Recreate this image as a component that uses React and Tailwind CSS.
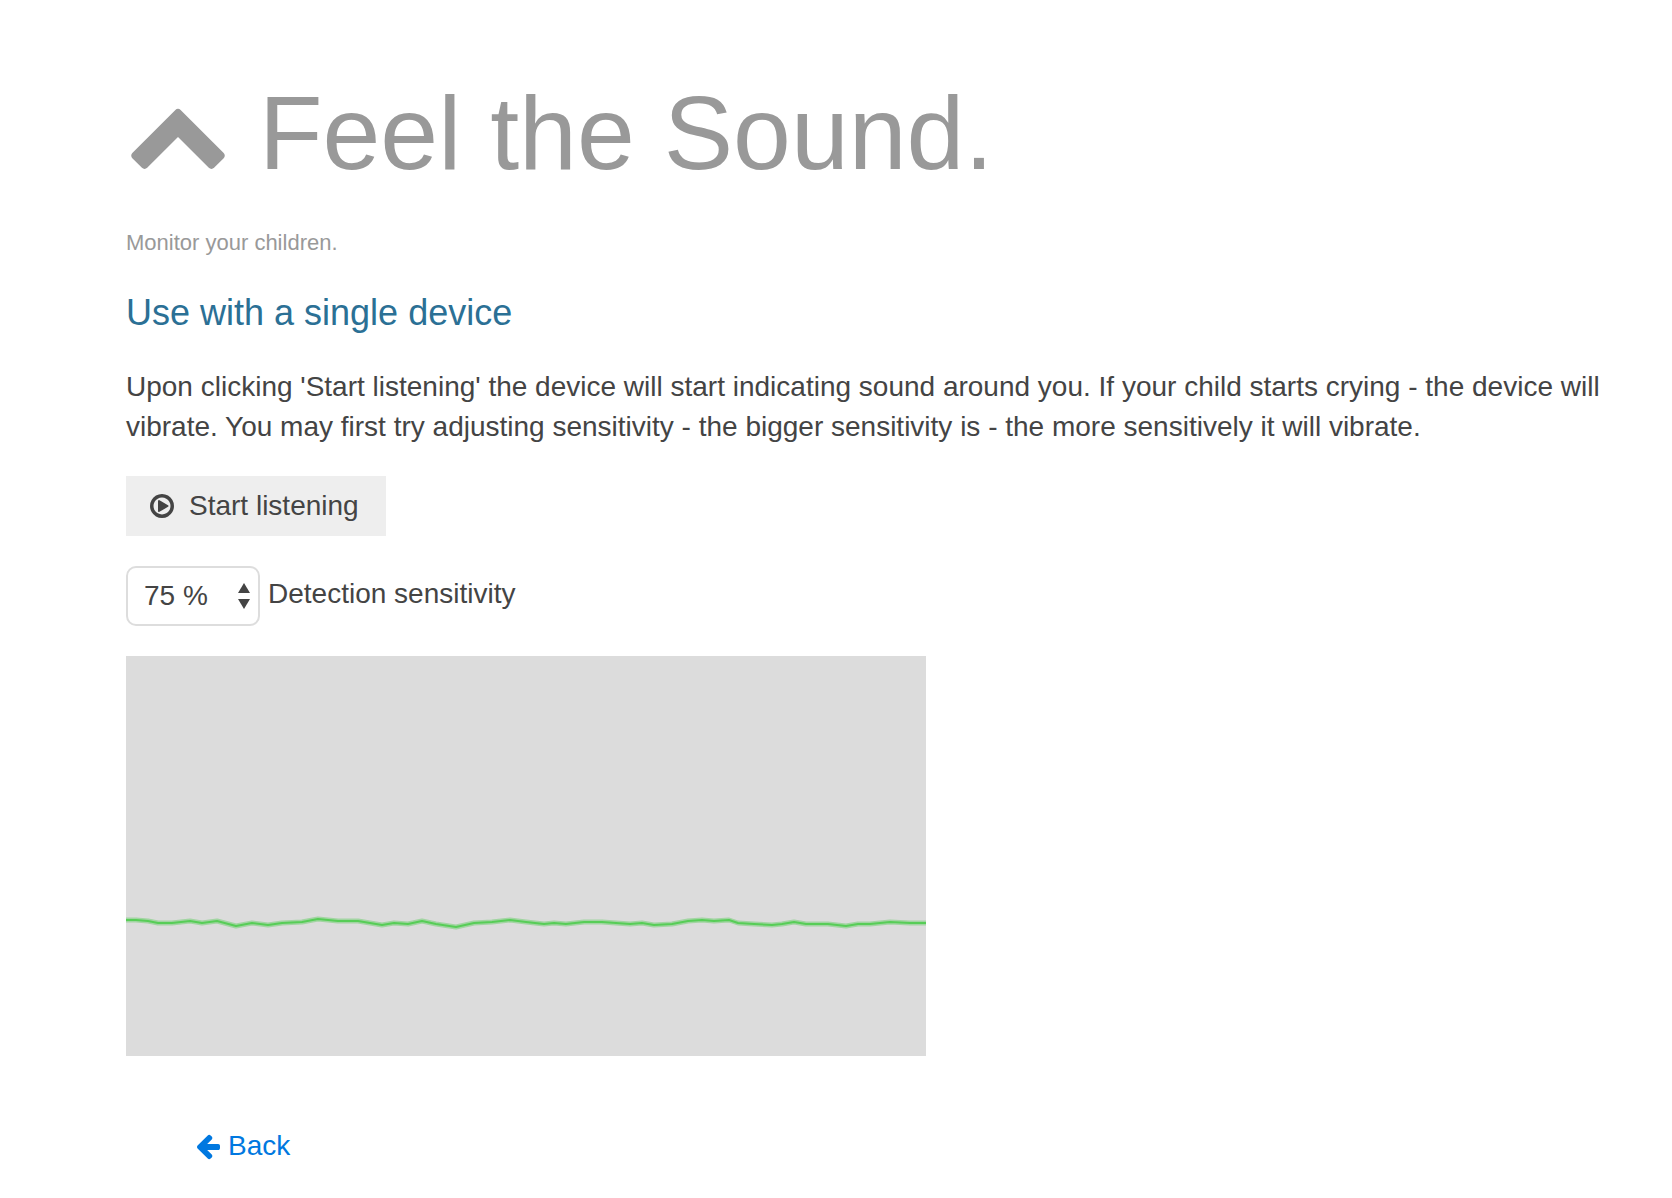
const WAVE = [
  [0, 264], [10, 264], [22, 265], [32, 267], [46, 267], [64, 265], [76, 267], [91, 265],
  [110, 270], [126, 267], [142, 269], [156, 267], [176, 266], [192, 263], [212, 265], [232, 265],
  [256, 269], [268, 267], [282, 268], [296, 265], [310, 268], [330, 271], [348, 267],
  [366, 266], [384, 264], [400, 266], [418, 268], [428, 267], [440, 268], [458, 266], [476, 266],
  [490, 267], [504, 268], [516, 267], [528, 269], [546, 268], [562, 265], [576, 264], [588, 265],
  [603, 264], [612, 267], [628, 268], [646, 269], [656, 268], [668, 266], [680, 268], [702, 268],
  [720, 270], [732, 268], [744, 268], [764, 266], [784, 267], [800, 267],
];
const WAVE_POINTS = WAVE.map((p) => p.join(",")).join(" ");

function Icon({ path, className }) {
  return (
    <svg viewBox="0 0 1792 1792" fill="currentColor" aria-hidden="true" className={className}>
      <path d={path} />
    </svg>
  );
}

const CHEVRON_UP =
  "M1683 1331l-166 165q-19 19-45 19t-45-19l-531-531-531 531q-19 19-45 19t-45-19l-166-165q-19-19-19-45.5t19-45.5l742-741q19-19 45-19t45 19l742 741q19 19 19 45.5t-19 45.5z";
const PLAY_CIRCLE =
  "M1312 896q0 37-32 55l-544 320q-15 9-32 9-16 0-32-8-32-19-32-56v-640q0-37 32-56 33-18 64 1l544 320q32 18 32 55zm128 0q0-148-73-273t-198-198-273-73-273 73-198 198-73 273 73 273 198 198 273 73 273-73 198-198 73-273zm224 0q0 209-103 385.5t-279.5 279.5-385.5 103-385.5-103-279.5-279.5-103-385.5 103-385.5 279.5-279.5 385.5-103 385.5 103 279.5 279.5 103 385.5z";
const ARROW_LEFT =
  "M1664 896v128q0 53-32.5 90.5t-84.5 37.5h-704l293 294q38 36 38 90t-38 90l-75 76q-37 37-90 37-52 0-91-37l-651-652q-37-37-37-90 0-52 37-91l651-650q38-38 91-38 52 0 90 38l75 74q38 38 38 91t-38 91l-293 293h704q52 0 84.5 37.5t32.5 90.5z";

function SensitivitySelect() {
  return (
    <div className="flex items-center gap-2">
      <div className="relative">
        <select
          id="sensitivity"
          defaultValue="75"
          className="block h-[60px] w-[134px] appearance-none rounded-[10px] border-2 border-[#ddd] bg-white pl-4 text-[28px] text-[#444]"
        >
          <option value="25">25 %</option>
          <option value="50">50 %</option>
          <option value="75">75 %</option>
          <option value="100">100 %</option>
        </select>
        <svg
          viewBox="0 0 12 26"
          fill="#444"
          aria-hidden="true"
          className="pointer-events-none absolute top-[17px] right-[10px] h-[26px] w-3"
        >
          <path d="M6 0L12 10H0z" />
          <path d="M6 26L12 16H0z" />
        </svg>
      </div>
      <label htmlFor="sensitivity" className="pb-1">
        Detection sensitivity
      </label>
    </div>
  );
}

function SoundChart() {
  return (
    <svg
      viewBox="0 0 800 400"
      role="img"
      aria-label="Sound level"
      className="mt-[30px] block w-full max-w-[800px] bg-[#dcdcdc]"
    >
      <g fill="none" stroke="#4acb4a" strokeLinejoin="round">
        <polyline points={WAVE_POINTS} strokeWidth="5" opacity="0.4" />
        <polyline points={WAVE_POINTS} strokeWidth="2" opacity="0.85" />
      </g>
    </svg>
  );
}

export default function App() {
  return (
    <main className="min-h-screen bg-white pt-[70px] pr-8 pb-10 pl-[126px] font-['Liberation_Sans',Arial,sans-serif] text-[28px] leading-10 text-[#444]">
      <h1 className="flex items-center gap-[29px] text-[104px] leading-[126px] text-[#999]">
        <Icon path={CHEVRON_UP} className="size-[104px] shrink-0" />
        Feel the Sound.
      </h1>
      <p className="mt-[29px] text-[22px] leading-9 text-[#999]">Monitor your children.</p>
      <h2 className="mt-7 text-[36px] leading-12 text-[#2b7095]">Use with a single device</h2>
      <p className="mt-[30px]">
        Upon clicking 'Start listening' the device will start indicating sound around you. If your
        child starts crying - the device will vibrate. You may first try adjusting sensitivity - the
        bigger sensitivity is - the more sensitively it will vibrate.
      </p>
      <button
        type="button"
        className="mt-[29px] mb-[30px] flex h-[60px] min-w-[260px] items-center gap-[13px] bg-[#eee] px-[22px]"
      >
        <Icon path={PLAY_CIRCLE} className="size-7" />
        Start listening
      </button>
      <SensitivitySelect />
      <SoundChart />
      <a href="#back" className="mt-[70px] ml-[68px] inline-flex items-center gap-1.5 text-[#0078e0]">
        <Icon path={ARROW_LEFT} className="size-7" />
        Back
      </a>
    </main>
  );
}
